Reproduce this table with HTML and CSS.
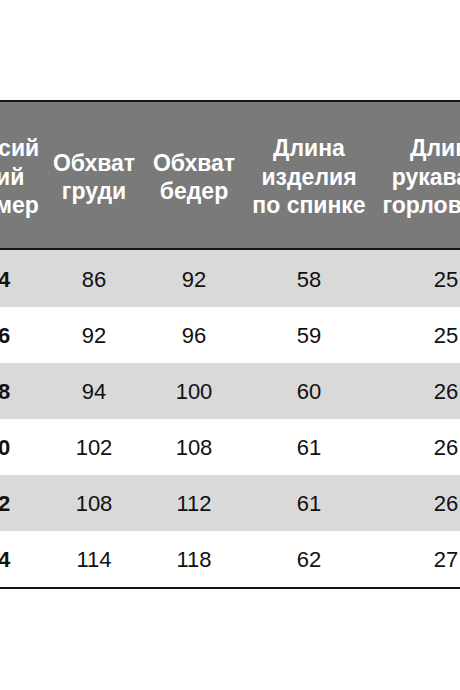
FILE: index.html
```html
<!DOCTYPE html>
<html lang="ru">
<head>
<meta charset="utf-8">
<title>Таблица размеров</title>
<link rel="stylesheet" href="styles.css">
</head>
<body>
<main class="page">
  <table class="sizes">
    <colgroup>
      <col class="c1"><col class="c2"><col class="c3"><col class="c4"><col class="c5">
    </colgroup>
    <thead>
      <tr>
        <th>Россий<br>ский<br>размер</th>
        <th>Обхват<br>груди</th>
        <th>Обхват<br>бедер</th>
        <th>Длина<br>изделия<br>по спинке</th>
        <th>Длина<br>рукава от<br>горловины</th>
      </tr>
    </thead>
    <tbody>
      <tr class="shade"><td class="ru">44</td><td>86</td><td>92</td><td>58</td><td>25</td></tr>
      <tr><td class="ru">46</td><td>92</td><td>96</td><td>59</td><td>25</td></tr>
      <tr class="shade"><td class="ru">48</td><td>94</td><td>100</td><td>60</td><td>26</td></tr>
      <tr><td class="ru">50</td><td>102</td><td>108</td><td>61</td><td>26</td></tr>
      <tr class="shade"><td class="ru">52</td><td>108</td><td>112</td><td>61</td><td>26</td></tr>
      <tr><td class="ru">54</td><td>114</td><td>118</td><td>62</td><td>27</td></tr>
    </tbody>
  </table>
</main>
</body>
</html>
```

FILE: styles.css
```css
html, body {
  margin: 0;
  padding: 0;
  background: #ffffff;
  overflow: hidden;
}

.page {
  width: 460px;
  height: 690px;
  padding-top: 100px;
  box-sizing: border-box;
  overflow: hidden;
}

.sizes {
  margin-left: -48px;
  border-collapse: collapse;
  table-layout: fixed;
  width: 566px;
  font-family: "Liberation Sans", Arial, sans-serif;
  font-size: 22px;
  color: #111111;
  border-top: 2px solid #141414;
  border-bottom: 2px solid #141414;
}

.c1 { width: 92px; }
.c2 { width: 100px; }
.c3 { width: 100px; }
.c4 { width: 130px; }
.c5 { width: 144px; }

.sizes th {
  background: #7a7a7a;
  color: #ffffff;
  font-size: 23px;
  font-weight: bold;
  line-height: 28.5px;
  height: 142px;
  padding: 4px 0 0;
  text-align: center;
  vertical-align: middle;
  white-space: nowrap;
  border-bottom: 2px solid #141414;
}

.sizes td {
  height: 54px;
  padding: 2px 0 0;
  text-align: center;
  vertical-align: middle;
  line-height: 24px;
}

.sizes tbody tr:first-child td {
  height: 55px;
}

.shade td {
  background: #d9d9d9;
}

.ru {
  font-weight: bold;
}
```
